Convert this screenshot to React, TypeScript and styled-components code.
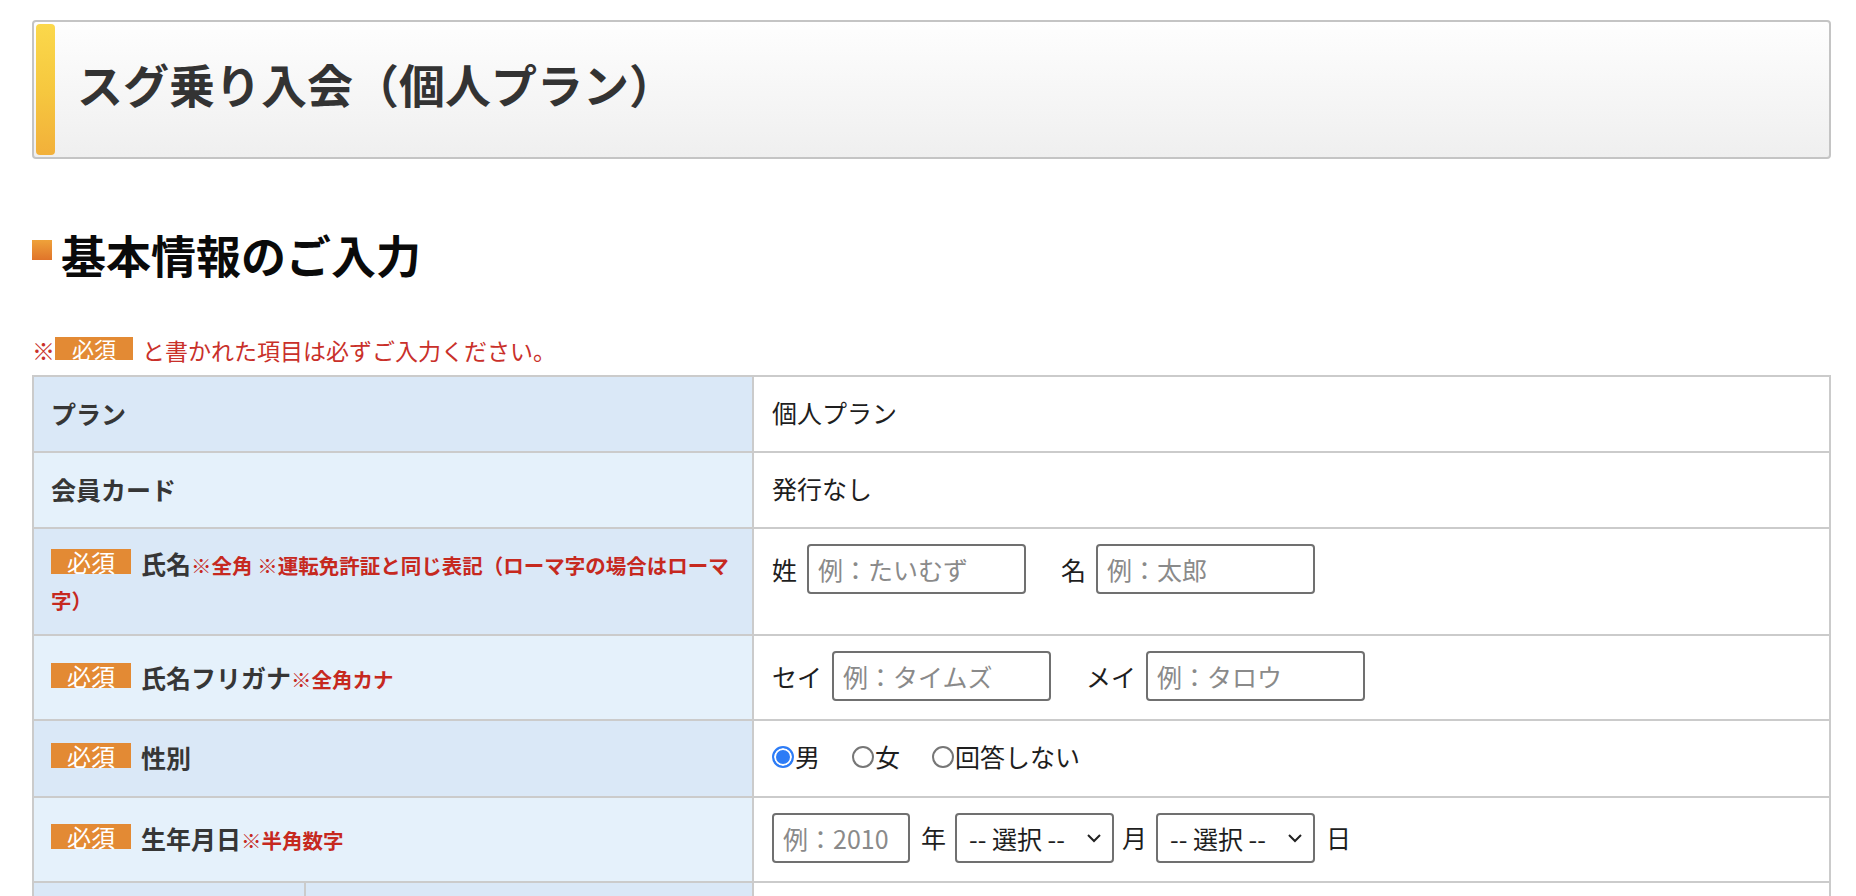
import * as React from 'react';
import styled, { createGlobalStyle } from 'styled-components';

const GlobalStyle = createGlobalStyle`
  body {
    margin: 0;
    background: #fff;
    font-family: 'Noto Sans CJK JP', 'Noto Sans', sans-serif;
    color: #222;
  }
`;

const Page = styled.div`
  padding: 20px 25px 40px 32px;
`;

const TitleBox = styled.div`
  display: flex;
  height: 139px;
  box-sizing: border-box;
  padding: 2px;
  border: 2px solid #c4c4c4;
  border-radius: 4px;
  background: linear-gradient(#fefefe, #efefef);
`;

const TitleBar = styled.div`
  width: 19px;
  flex-shrink: 0;
  border-radius: 4px;
  background: linear-gradient(#fbd84b, #f6c83f 50%, #f2b03a);
`;

const Title = styled.h1`
  align-self: center;
  margin: 0 0 14px 22px;
  font-size: 46px;
  line-height: 58px;
  font-weight: 700;
  color: #333;
`;

const SectionHeading = styled.div`
  display: flex;
  align-items: flex-start;
  margin-top: 68px;
`;

const HeadingMark = styled.span`
  width: 20px;
  height: 20px;
  margin-top: 13px;
  background: linear-gradient(#efa23a, #e0742a);
`;

const HeadingText = styled.h2`
  margin: 0 0 0 9px;
  font-size: 45px;
  line-height: 56px;
  font-weight: 700;
  color: #0a0a0a;
`;

const Notice = styled.p`
  margin: 52px 0 10px;
  font-size: 23px;
  line-height: 30px;
  color: #c9302a;
`;

const Badge = styled.span<{ $large?: boolean }>`
  display: inline-block;
  padding: 0 ${({ $large }) => ($large ? '16px' : '17px')};
  margin-right: ${({ $large }) => ($large ? '10px' : '9px')};
  font-size: ${({ $large }) => ($large ? '24px' : '22px')};
  line-height: ${({ $large }) => ($large ? '25px' : '23px')};
  font-weight: 400;
  color: #fff;
  background: #e38a34;
  vertical-align: 2px;
`;

const FormTable = styled.table`
  width: 100%;
  table-layout: fixed;
  border-collapse: collapse;
  border: 2px solid #cbcbcb;
`;

const LabelCell = styled.th<{ $tone: 'dark' | 'light' }>`
  padding: 17px 10px 18px 17px;
  border: 2px solid #cbcbcb;
  background: ${({ $tone }) => ($tone === 'dark' ? '#dae8f7' : '#e5f1fb')};
  text-align: left;
  vertical-align: middle;
  font-size: 25px;
  line-height: 35px;
  font-weight: 700;
  color: #363636;
`;

const ValueCell = styled.td`
  padding: 15px 18px 18px;
  border: 2px solid #cbcbcb;
  background: #fff;
  vertical-align: top;
  font-size: 25px;
  line-height: 41px;
  color: #1e1e1e;
`;

const RedNote = styled.span`
  font-size: 20.5px;
  line-height: 20px;
  font-weight: 700;
  color: #c6291f;
`;

const FieldRow = styled.div`
  display: flex;
  align-items: center;
  min-height: 50px;
`;

const FieldLabel = styled.span<{ $gapBefore?: boolean }>`
  margin: 0 10px 0 ${({ $gapBefore }) => ($gapBefore ? '35px' : '0')};
  font-size: 25px;
  color: #1e1e1e;
`;

const TextInput = styled.input<{ $width: number }>`
  width: ${({ $width }) => $width}px;
  height: 50px;
  box-sizing: border-box;
  padding: 0 9px;
  border: 2px solid #707070;
  border-radius: 4px;
  font-family: inherit;
  font-size: 25px;
  color: #222;
  background: #fff;

  &::placeholder {
    color: #8a8a8a;
  }
`;

const SelectWrap = styled.span`
  position: relative;
  display: inline-flex;
  margin: 0 8px 0 0;
`;

const Select = styled.select`
  width: 159px;
  height: 50px;
  box-sizing: border-box;
  padding: 0 34px 0 12px;
  border: 2px solid #707070;
  border-radius: 4px;
  appearance: none;
  font-family: inherit;
  font-size: 25px;
  color: #1e1e1e;
  background: #fff;
`;

const Chevron = styled.svg`
  position: absolute;
  right: 12px;
  top: 50%;
  width: 16px;
  height: 10px;
  margin-top: -5px;
  pointer-events: none;
`;

const RadioOption = styled.label`
  display: inline-flex;
  align-items: center;
  margin-right: 32px;
  font-size: 25px;
  color: #1e1e1e;
`;

const Radio = styled.input`
  appearance: none;
  width: 22px;
  height: 22px;
  margin: 0 1px 0 0;
  box-sizing: border-box;
  border: 2px solid #767676;
  border-radius: 50%;
  background: #fff;

  &:checked {
    border-color: #2d7cf6;
    background: #2d7cf6;
    box-shadow: inset 0 0 0 2px #fff;
  }
`;

const UnitText = styled.span<{ $before?: number }>`
  margin: 0 9px 0 ${({ $before = 11 }) => $before}px;
`;

const SelectBox = ({ name }: { name: string }) => (
  <SelectWrap>
    <Select name={name} defaultValue="">
      <option value="">-- 選択 --</option>
    </Select>
    <Chevron viewBox="0 0 16 10">
      <polyline points="2,2 8,8 14,2" fill="none" stroke="#222" strokeWidth="2" />
    </Chevron>
  </SelectWrap>
);

const genders = ['男', '女', '回答しない'];

const App = () => {
  return (
    <Page>
      <GlobalStyle />
      <TitleBox>
        <TitleBar />
        <Title>スグ乗り入会（個人プラン）</Title>
      </TitleBox>

      <SectionHeading>
        <HeadingMark />
        <HeadingText>基本情報のご入力</HeadingText>
      </SectionHeading>

      <Notice>
        ※<Badge>必須</Badge>と書かれた項目は必ずご入力ください。
      </Notice>

      <FormTable>
        <colgroup>
          <col style={{ width: 272 }} />
          <col style={{ width: 448 }} />
          <col />
        </colgroup>
        <tbody>
          <tr>
            <LabelCell colSpan={2} $tone="dark">プラン</LabelCell>
            <ValueCell>個人プラン</ValueCell>
          </tr>
          <tr>
            <LabelCell colSpan={2} $tone="light">会員カード</LabelCell>
            <ValueCell>発行なし</ValueCell>
          </tr>
          <tr>
            <LabelCell colSpan={2} $tone="dark">
              <Badge $large>必須</Badge>氏名<RedNote>※全角 ※運転免許証と同じ表記（ローマ字の場合はローマ字）</RedNote>
            </LabelCell>
            <ValueCell>
              <FieldRow>
                <FieldLabel>姓</FieldLabel>
                <TextInput $width={219} placeholder="例：たいむず" />
                <FieldLabel $gapBefore>名</FieldLabel>
                <TextInput $width={219} placeholder="例：太郎" />
              </FieldRow>
            </ValueCell>
          </tr>
          <tr>
            <LabelCell colSpan={2} $tone="light">
              <Badge $large>必須</Badge>氏名フリガナ<RedNote>※全角カナ</RedNote>
            </LabelCell>
            <ValueCell>
              <FieldRow>
                <FieldLabel>セイ</FieldLabel>
                <TextInput $width={219} placeholder="例：タイムズ" />
                <FieldLabel $gapBefore>メイ</FieldLabel>
                <TextInput $width={219} placeholder="例：タロウ" />
              </FieldRow>
            </ValueCell>
          </tr>
          <tr>
            <LabelCell colSpan={2} $tone="dark">
              <Badge $large>必須</Badge>性別
            </LabelCell>
            <ValueCell>
              {genders.map((g, i) => (
                <RadioOption key={g}>
                  <Radio type="radio" name="gender" defaultChecked={i === 0} />
                  {g}
                </RadioOption>
              ))}
            </ValueCell>
          </tr>
          <tr>
            <LabelCell colSpan={2} $tone="light">
              <Badge $large>必須</Badge>生年月日<RedNote>※半角数字</RedNote>
            </LabelCell>
            <ValueCell>
              <FieldRow>
                <TextInput $width={138} placeholder="例：2010" />
                <UnitText>年</UnitText>
                <SelectBox name="month" />
                <UnitText $before={0}>月</UnitText>
                <SelectBox name="day" />
                <UnitText $before={3}>日</UnitText>
              </FieldRow>
            </ValueCell>
          </tr>
          <tr>
            <LabelCell $tone="dark" rowSpan={2}>
              <Badge $large>必須</Badge>住所
            </LabelCell>
            <LabelCell $tone="dark">郵便番号</LabelCell>
            <ValueCell>
              <FieldRow>
                <TextInput $width={219} placeholder="例：1410031" />
              </FieldRow>
            </ValueCell>
          </tr>
          <tr>
            <LabelCell $tone="light">都道府県</LabelCell>
            <ValueCell>
              <SelectBox name="pref" />
            </ValueCell>
          </tr>
        </tbody>
      </FormTable>
    </Page>
  );
};

export default App;
